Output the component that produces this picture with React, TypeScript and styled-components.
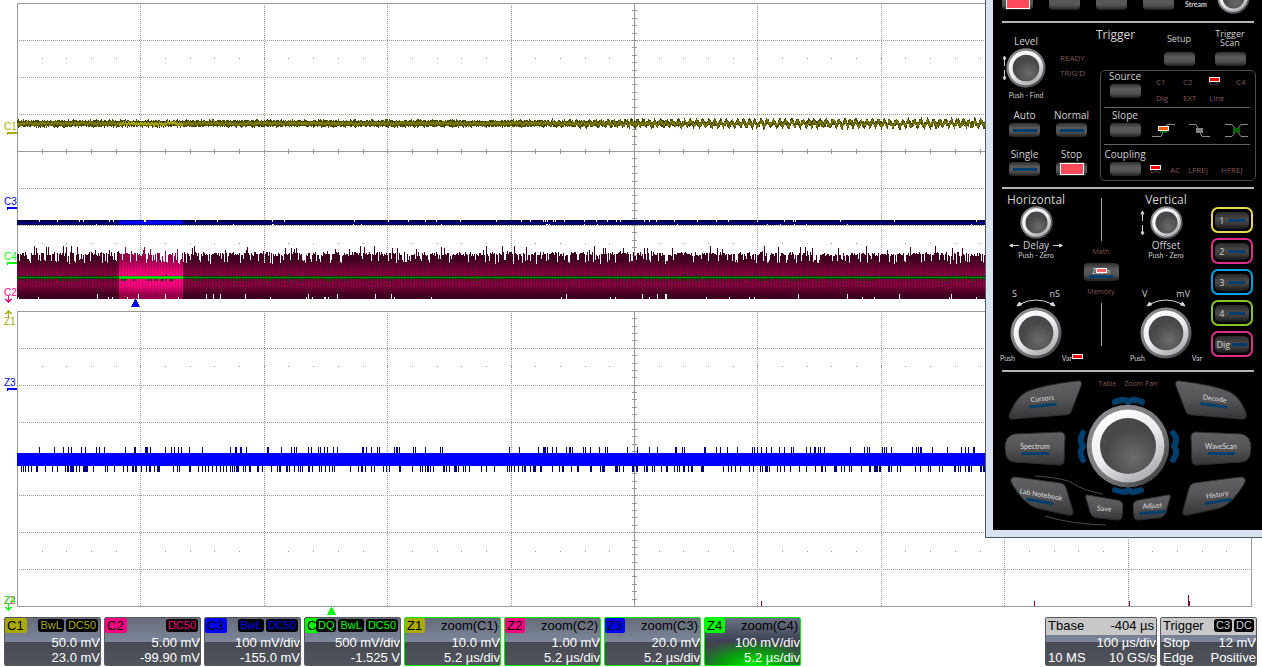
import React from 'react';
import styled, { createGlobalStyle, css } from 'styled-components';

const Global = createGlobalStyle`
  * { box-sizing: border-box; }
  html, body { margin: 0; background: #fff; }
  body { font-family: "Liberation Sans", Arial, sans-serif; overflow: hidden; }
  button { font: inherit; color: inherit; border: 0; padding: 0; margin: 0; background: none; cursor: pointer; }
`;

/* ---------- waveform display ---------- */

const VIEW_W = 1262;
const VIEW_H = 616;
const LEFT = 17;
const RIGHT = 1251;
const TRACE_END = 1000;
const GRID = '#999999';

const rng = (seed: number) => () => {
  seed = (seed * 1664525 + 1013904223) % 4294967296;
  return seed / 4294967296;
};
const bar = (x: number, y: number, w: number, h: number) => `M${x} ${y}h${w}v${h}h${-w}z`;
const colX = (i: number, parts = 10) => Math.round(LEFT + ((RIGHT - LEFT) * i) / parts);

const Graticule = ({ top, bottom }: { top: number; bottom: number }) => {
  const rowY = (i: number, parts = 8) => Math.round(top + ((bottom - top) * i) / parts - 0.1);
  const mid = rowY(4);
  const center = colX(5);
  let solid = bar(LEFT, top, RIGHT - LEFT + 1, 1) + bar(LEFT, bottom, RIGHT - LEFT + 1, 1);
  solid += bar(LEFT, top, 1, bottom - top) + bar(RIGHT, top, 1, bottom - top);
  solid += bar(center, top, 1, bottom - top) + bar(LEFT, mid, RIGHT - LEFT, 1);
  for (let i = 1; i < 40; i++) solid += bar(center - 2, rowY(i, 40), 5, 1);
  for (let i = 1; i < 50; i++) solid += bar(colX(i, 50), mid - 2, 1, 5);
  for (let i = 1; i < 50; i++) {
    solid += bar(colX(i, 50), rowY(3, 16), 1, 1) + bar(colX(i, 50), rowY(13, 16), 1, 1);
  }
  let dotted = '';
  for (let i = 1; i < 8; i++) {
    if (i !== 4) for (let x = LEFT + 2; x < RIGHT; x += 2) dotted += bar(x, rowY(i), 1, 1);
  }
  for (let i = 1; i < 10; i++) {
    if (i !== 5) for (let y = top + 2; y < bottom; y += 2) dotted += bar(colX(i), y, 1, 1);
  }
  return <path d={solid + dotted} fill={GRID} />;
};

const buildC1 = () => {
  const r = rng(7);
  let dark = '', mid = '', hot = '';
  let phase = 0;
  for (let x = LEFT; x < TRACE_END; x++) {
    phase += 0.7 + r() * 0.7;
    const swing = x > 480 ? Math.sin(phase) * Math.min(2, (x - 480) / 130) : 0;
    const lift = Math.round(swing);
    const up = r() < 0.1 ? 5 : r() < 0.5 ? 3 : 4;
    const down = r() < 0.1 ? 4 : r() < 0.5 ? 2 : 3;
    dark += bar(x, 124 - up + lift, 1, up + down);
    const inHot = x >= 119 && x < 183;
    const seg = bar(x, 121 + lift + Math.round(r() * 2), 1, 3);
    if (inHot) hot += seg; else mid += seg;
  }
  return { dark, mid, hot };
};

const buildC3Gaps = () => {
  const r = rng(33);
  let d = '';
  for (let x = LEFT; x < TRACE_END; x++) {
    if (r() < 0.04) d += bar(x, 220, 1, 2);
    if (r() < 0.02) d += bar(x, 224, 1, 1);
  }
  return d;
};

const buildC2 = () => {
  const r = rng(91);
  let body = '', bodyHot = '', stripes = '', stripesHot = '', notch = '', green = '';
  for (let x = LEFT; x < TRACE_END; x++) {
    const hot = x >= 119 && x < 183;
    const roll = r();
    const top = roll < 0.24 ? 259 + Math.round(r() * 5) : roll < 0.9 ? 252 + Math.round(r() * 4) : 246 + Math.round(r() * 5);
    const column = bar(x, top, 1, 299 - top);
    if (hot) bodyHot += column; else body += column;
    if (x % 3 === 1) {
      const start = 259 + Math.round(r() * 4);
      const stripe = bar(x, start, 1, 297 - start);
      if (hot) stripesHot += stripe; else stripes += stripe;
    }
    if (r() < 0.055) notch += bar(x, r() < 0.5 ? 294 : 297, 1, 5);
    if (r() < 0.2) green += bar(x, 279, 1, 2);
    if (r() < 0.01) green += bar(x, 274, 1, 2);
  }
  return { body, bodyHot, stripes, stripesHot, notch, green };
};

const buildZ3 = () => {
  const r = rng(515);
  let d = '';
  for (let x = LEFT; x < TRACE_END; x++) {
    if (r() < 0.11) d += bar(x, 447, 1, 6);
    if (r() < 0.27) d += bar(x, 466, 1, 6);
  }
  return d;
};

const c1 = buildC1();
const c2 = buildC2();
const c3Gaps = buildC3Gaps();
const z3 = buildZ3();

const OLIVE = '#aaaa00';
const PINK = '#ff0080';
const BLUE = '#0000ff';
const LIME = '#00ff00';

type Mark = { text: string; y: number; color: string; kind: 'bar' | 'down' | 'up' };
const marks: Mark[] = [
  { text: 'C1', y: 130, color: OLIVE, kind: 'bar' },
  { text: 'C3', y: 205, color: BLUE, kind: 'bar' },
  { text: 'C4', y: 260, color: LIME, kind: 'bar' },
  { text: 'C2', y: 296, color: PINK, kind: 'down' },
  { text: 'Z1', y: 325, color: OLIVE, kind: 'up' },
  { text: 'Z3', y: 386, color: BLUE, kind: 'bar' },
  { text: 'Z2', y: 604, color: PINK, kind: 'down' },
  { text: 'Z4', y: 604, color: LIME, kind: 'down' },
];

const Plot = styled.svg`
  display: block;
  width: 100%;
  height: auto;
  font: 10px "Liberation Sans", Arial, sans-serif;
`;

const markShape = (m: Mark) => {
  if (m.kind === 'bar') return bar(7, m.y + 2, 10, 2) + bar(7, m.y + 2, 1, 3);
  const y = m.kind === 'down' ? m.y + 3 : m.y - 12;
  const dir = m.kind === 'down' ? 1 : -1;
  return bar(8, y - 3, 1, 7) + bar(7, y + 2 * dir, 3, 1) + bar(6, y + dir, 2, 1) + bar(9, y + dir, 2, 1) + bar(5, y, 2, 1) + bar(10, y, 2, 1);
};

const TraceShade = ({ id, edge, core }: { id: string; edge: string; core: string }) => (
  <linearGradient id={id} gradientUnits="userSpaceOnUse" x1="0" y1="246" x2="0" y2="299">
    <stop offset="0.25" stopColor={edge} />
    <stop offset="0.5" stopColor={core} />
    <stop offset="0.75" stopColor={core} />
    <stop offset="0.92" stopColor={edge} />
  </linearGradient>
);

const Waveforms = () => (
  <Plot viewBox={`0 0 ${VIEW_W} ${VIEW_H}`} shapeRendering="crispEdges" role="img" aria-label="Oscilloscope traces">
    <defs>
      <TraceShade id="c2-body" edge="#400020" core="#84003f" />
      <TraceShade id="c2-stripe" edge="#400020" core="#640031" />
      <TraceShade id="c2-hot" edge="#960049" core="#ff0080" />
      <TraceShade id="c2-hot-stripe" edge="#900048" core="#cc0066" />
    </defs>
    <Graticule top={3} bottom={299} />
    <Graticule top={311} bottom={606} />
    <path d={c1.dark} fill="#484800" />
    <path d={c1.mid} fill="#787800" />
    <path d={c1.hot} fill="#a4a400" />
    <path d={bar(LEFT, 220, TRACE_END, 5)} fill="#000044" />
    <path d={bar(LEFT, 222, TRACE_END, 2)} fill="#00007c" />
    <path d={bar(119, 220, 64, 5)} fill="#000090" />
    <path d={bar(119, 221, 64, 3)} fill={BLUE} />
    <path d={c3Gaps} fill="#fff" />
    <path d={c2.body} fill="url(#c2-body)" />
    <path d={c2.stripes} fill="url(#c2-stripe)" />
    <path d={c2.bodyHot} fill="url(#c2-hot)" />
    <path d={c2.stripesHot} fill="url(#c2-hot-stripe)" />
    <path d={c2.notch} fill="#fff" />
    <path d={bar(LEFT, 299, TRACE_END, 4)} fill="#fff" />
    <path d={c2.green + bar(LEFT, 276, TRACE_END, 3)} fill="#004400" />
    <path d={bar(LEFT, 277, TRACE_END, 1)} fill="#008800" />
    <path d={bar(119, 276, 64, 3)} fill="#00b400" />
    <path d={bar(119, 277, 64, 1)} fill={LIME} />
    <path d={z3} fill="#000080" />
    <path d={bar(LEFT, 453, TRACE_END, 13)} fill={BLUE} />
    <path d={bar(761, 601, 1, 5) + bar(1034, 601, 1, 5) + bar(1129, 601, 1, 5) + bar(1188, 595, 1, 11) + bar(1189, 601, 1, 5)} fill="#80003e" />
    <path d="M135 299h1l4 8h-9z" fill={BLUE} />
    <path d="M331 607h1l4 8h-9z" fill={LIME} />
    {marks.map(m => (
      <g key={m.text} fill={m.color}>
        <text x="4" y={m.y}>{m.text}</text>
        <path d={markShape(m)} />
      </g>
    ))}
  </Plot>
);

/* ---------- descriptor boxes ---------- */

const Screen = styled.main`
  position: relative;
  min-height: 100vh;
  overflow: hidden;
`;
const Descriptors = styled.footer`
  display: flex;
  gap: 3px;
  padding: 1px 5px 0 4px;
`;
const Spacer = styled.div`flex: 1;`;
const Box = styled.section<{ $zoom?: boolean; $lit?: boolean; $wide?: boolean }>`
  width: ${p => (p.$wide ? 112 : 97)}px;
  height: 49px;
  border: 1px solid ${p => (p.$zoom ? '#00f000' : '#55585f')};
  border-radius: 2px;
  color: #fff;
  font-size: 13px;
  line-height: 15px;
  white-space: nowrap;
  text-align: right;
  overflow: hidden;
  background: ${p => p.$lit
    ? 'radial-gradient(ellipse 60px 24px at 50% 46px, #00e800, #0a9a10 50%, transparent 100%), linear-gradient(#6b7184, #3d4053 50%, #40444e 52%)'
    : 'linear-gradient(#666b79, #7d869b 51%, #474a53 52%, #51545c)'};
`;
const Head = styled.header<{ $light?: boolean }>`
  display: flex;
  justify-content: space-between;
  height: 17px;
  padding: ${p => (p.$light ? '0 2px' : '0 2px 0 0')};
  color: #000;
  background: ${p => (p.$light ? '#c8c8c8' : 'none')};
`;
const Tag = styled.b<{ $color: string }>`
  height: 15px;
  padding: 0 3px 0 2px;
  font-weight: 400;
  border-radius: 2px;
  color: #000;
  background: ${p => p.$color};
`;
const Flags = styled.span`
  display: flex;
  gap: 2px;
  margin-left: -8px;
  padding-top: 1px;
`;
const Flag = styled.i<{ $color: string }>`
  height: 13px;
  padding: 0 2px;
  border-radius: 3px;
  font: normal 11px/13px "Liberation Sans", Arial, sans-serif;
  color: ${p => p.$color};
  background: #000;
`;
const Line = styled.div<{ $split?: boolean }>`
  display: flex;
  justify-content: ${p => (p.$split ? 'space-between' : 'flex-end')};
  padding-left: 2px;
`;

type Desc = { tag: string; color: string; flags?: string[]; title?: string; a: string; b: string; lit?: boolean };
const descs: Desc[] = [
  { tag: 'C1', color: OLIVE, flags: ['BwL', 'DC50'], a: '50.0 mV', b: '23.0 mV' },
  { tag: 'C2', color: PINK, flags: ['DC50'], a: '5.00 mV', b: '-99.90 mV' },
  { tag: 'C3', color: BLUE, flags: ['BwL', 'DC50'], a: '100 mV/div', b: '-155.0 mV' },
  { tag: 'C', color: LIME, flags: ['DQ', 'BwL', 'DC50'], a: '500 mV/div', b: '-1.525 V' },
  { tag: 'Z1', color: OLIVE, title: 'zoom(C1)', a: '10.0 mV', b: '5.2 µs/div' },
  { tag: 'Z2', color: PINK, title: 'zoom(C2)', a: '1.00 mV', b: '5.2 µs/div' },
  { tag: 'Z3', color: BLUE, title: 'zoom(C3)', a: '20.0 mV', b: '5.2 µs/div' },
  { tag: 'Z4', color: LIME, title: 'zoom(C4)', a: '100 mV/div', b: '5.2 µs/div', lit: true },
];

/* ---------- front panel window ---------- */

const Window = styled.aside`
  position: absolute;
  top: 0;
  right: 0;
  width: 277px;
  padding: 0 0 7px 7px;
  border: solid #55585f;
  border-width: 0 0 1px 1px;
  background: #d8e4f2;
`;
const Panel = styled.div`
  height: 530px;
  padding: 0 7px 0 9px;
  overflow: hidden;
  background: #000;
  color: #d0d0d0;
  font-family: "Open Sans", "Noto Sans", sans-serif;
  font-size: 10px;
  line-height: 11px;
`;
const Strip = styled.div`
  display: flex;
  height: 21px;
  gap: 16px;
  align-items: flex-start;
  overflow: hidden;
`;
const Rule = styled.hr`
  width: 252px;
  height: 2px;
  margin: 0;
  border: 0;
  background: #b4b4b4;
`;
const Text = styled.span<{ $size?: number; $dim?: boolean }>`
  font-size: ${p => p.$size ?? 10}px;
  line-height: ${p => (p.$size ?? 10) + 1}px;
  white-space: nowrap;
  color: ${p => (p.$dim ? '#805858' : 'inherit')};
`;
const Tiny = styled(Text).attrs({ $size: 7 })`
  font-family: Lato, "Open Sans", sans-serif;
`;
const Cap = styled.button<{ $lamp?: 'blue' | 'red' }>`
  display: flex;
  align-items: center;
  justify-content: center;
  flex: none;
  width: 31px;
  height: 14px;
  border-radius: 4px;
  background: linear-gradient(#303030, #5a5a5a 35%, #545454 65%, #202020);
  ${p => p.$lamp && css`
    &::after {
      content: "";
      width: ${p.$lamp === 'red' ? 22 : 24}px;
      height: ${p.$lamp === 'red' ? 10 : 3}px;
      border: ${p.$lamp === 'red' ? '1px solid #fff' : '0'};
      background: ${p.$lamp === 'red' ? '#ff4a5c' : '#003f6d'};
    }
  `}
`;
const Led = styled.i`
  flex: none;
  width: 11px;
  height: 5px;
  border: 1px solid #fff;
  background: #f00;
`;

const Knob = ({ size, label }: { size: number; label: string }) => {
  const id = `knob-${label}`;
  return (
    <button aria-label={label}>
      <svg width={size} height={size} viewBox="0 0 60 60" display="block">
        <defs>
          <linearGradient id={`${id}-rim`} x1="0" y1="0" x2="1" y2="1">
            <stop offset="0" stopColor="#929294" />
            <stop offset="0.6" stopColor="#747476" />
            <stop offset="1" stopColor="#2e2e30" />
          </linearGradient>
          <linearGradient id={`${id}-ring`} x1="0.2" y1="0" x2="0.8" y2="1">
            <stop offset="0" stopColor="#ffffff" />
            <stop offset="0.5" stopColor="#ececf0" />
            <stop offset="1" stopColor="#a4a4a8" />
          </linearGradient>
          <radialGradient id={`${id}-face`} cx="0.6" cy="0.7">
            <stop offset="0" stopColor="#6c6c6e" />
            <stop offset="1" stopColor="#48484a" />
          </radialGradient>
        </defs>
        <circle cx="30" cy="30" r="29.5" fill={`url(#${id}-rim)`} />
        <circle cx="30" cy="30" r="26" fill={`url(#${id}-ring)`} />
        <circle cx="30" cy="30" r="20" fill={`url(#${id}-face)`} />
      </svg>
    </button>
  );
};

const VArrows = () => (
  <svg width="5" height="26" viewBox="0 0 5 26" stroke="#d0d0d0" fill="#d0d0d0" display="block">
    <path d="M2.500 2v9M2.500 15v9" />
    <path d="M2.500 1l1.500 3h-3zM2.500 25l1.500-3h-3z" />
  </svg>
);
const HArrow = ({ flip }: { flip?: boolean }) => (
  <svg width="10" height="5" viewBox="0 0 10 5" stroke="#d0d0d0" fill="#d0d0d0" transform={flip ? 'scale(-1 1)' : undefined}>
    <path d="M2 2.500h8" />
    <path d="M0.500 2.500l3-1.500v3z" />
  </svg>
);
const SweepArrow = () => (
  <svg width="40" height="8" viewBox="0 0 40 8" display="block" stroke="#d8d8d8" fill="none">
    <path d="M3 5.500Q20 -3.500 37 5.500" />
    <path d="M1 7l2.500-4 2 3zM39 7l-2.500-4-2 3z" fill="#d8d8d8" />
  </svg>
);

const Trigger = styled.section`
  display: grid;
  grid-template-columns: 98px 156px;
  height: 164px;
`;
const TrigLeft = styled.div`
  display: flex;
  flex-direction: column;
  padding-top: 13px;
`;
const LevelRow = styled.div`
  display: grid;
  grid-template-columns: 4px 40px 1fr;
  align-items: center;
  height: 42px;
`;
const StatusCol = styled.div`
  display: grid;
  gap: 6px;
  padding: 0 0 6px 14px;
`;
const LevelLabel = styled.div`
  width: 48px;
  text-align: center;
`;
const Pairs = styled.div`
  display: grid;
  grid-template-columns: 45px 49px;
  row-gap: 12px;
  padding-top: 10px;
`;
const Labelled = styled.label`
  display: flex;
  flex-direction: column;
  align-items: center;
  gap: 2px;
`;
const TrigHead = styled.div`
  display: grid;
  grid-template-columns: 54px 50px 52px;
  height: 47px;
  padding-top: 5px;
`;
const TrigTitle = styled(Text)`
  margin-left: -4px;
`;
const HeadKey = styled.label`
  display: flex;
  flex-direction: column;
  align-items: center;
  justify-content: flex-end;
  gap: 9px;
  height: 38px;
  padding-bottom: 0;
  text-align: center;
  & > span { line-height: 9px; }
`;
const ScanKey = styled(HeadKey)`
  gap: 5px;
`;
const Group = styled.div`
  width: 156px;
  height: 111px;
  padding: 0 5px 0 3px;
  border: 1px solid #4a4a4a;
  border-radius: 5px;
`;
const GroupRow = styled.div<{ $pad: number }>`
  display: grid;
  grid-template-columns: 42px 1fr;
  height: ${p => 36 + p.$pad / 2}px;
  padding-top: ${p => p.$pad}px;
  & + & { border-top: 1px solid #666; }
`;
const Options = styled.div<{ $tight?: boolean }>`
  display: grid;
  grid-template-columns: ${p => (p.$tight ? '20px 18px 33px 1fr' : '27px 26px 27px 1fr')};
  align-content: ${p => (p.$tight ? 'end' : 'center')};
  row-gap: 7px;
  padding: ${p => (p.$tight ? '0 0 8px 4px' : '0 0 0 10px')};
`;
const Stack = styled.span`
  display: grid;
  & > * { grid-area: 1 / 1; }
  & > i { align-self: start; }
`;
const Edges = styled.svg`
  align-self: end;
`;
const EdgeIcons = () => (
  <Edges width="104" height="26" viewBox="0 0 104 26" fill="none" stroke="#8a8a8a" strokeWidth="1">
    <path d="M6 18.500h9l6-12h8M43 6.500h7l6 12h8M79 6.500h7l9 12h7M79 18.500h7l9-12h7" />
    <rect x="14" y="10" width="7" height="5" fill="#006400" stroke="none" />
    <rect x="50" y="10" width="7" height="5" fill="#808080" stroke="none" />
    <rect x="87" y="10" width="7" height="5" fill="#006400" stroke="none" />
    <rect x="12.500" y="8.500" width="10" height="4" fill="#ff5a00" stroke="#fff" />
  </Edges>
);

const Axes = styled.section`
  display: grid;
  grid-template-columns: 68px 62px 68px 1fr;
  height: 181px;
`;
const Axis = styled.div`
  display: flex;
  flex-direction: column;
  align-items: center;
  padding-top: 4px;
`;
const KnobRow = styled.div`
  display: grid;
  grid-template-columns: 5px 33px 5px;
  gap: 5px;
  align-items: center;
`;
const DelayRow = styled.div`
  display: flex;
  gap: 4px;
  align-items: center;
  justify-content: space-between;
  height: 11px;
  margin-top: 1px;
`;
const Units = styled.div`
  display: flex;
  justify-content: space-between;
  width: 48px;
  margin-top: 30px;
`;
const Feet = styled.div`
  display: flex;
  justify-content: space-between;
  width: 72px;
  height: 9px;
  margin-top: -5px;
`;
const VarLed = styled.span`
  display: flex;
  & > i { margin: 0 -11px 0 0; }
`;
const Middle = styled.div`
  display: flex;
  flex-direction: column;
  align-items: center;
  gap: 7px;
  padding-top: 9px;
`;
const Stem = styled.i`
  width: 1px;
  height: 43px;
  background: #a0a0a0;
`;
const ZoomCap = styled(Cap)`
  width: 35px;
  height: 18px;
  flex-direction: column;
  &::after { height: 3px; }
`;
const ZoomLabel = styled(Stack)`
  justify-items: center;
  & > i { align-self: center; background: #ff6464; }
`;
const Channels = styled.div`
  display: flex;
  flex-direction: column;
  gap: 5px;
  padding: 18px 3px 0 11px;
`;
const Channel = styled.button<{ $ring: string }>`
  display: flex;
  align-items: center;
  justify-content: center;
  width: 42px;
  height: 26px;
  border: 2px solid ${p => p.$ring};
  border-radius: 7px;
`;
const ChannelFace = styled.span`
  display: flex;
  align-items: center;
  justify-content: space-evenly;
  width: 34px;
  height: 17px;
  border-radius: 5px;
  font-size: 9px;
  background: linear-gradient(#2a2a2a, #4a4a4a 45%, #3e3e3e 65%, #181818);
  & > i { width: 16px; height: 3px; background: #003f6d; }
`;

const Nav = styled.section`
  display: grid;
  grid-template-columns: 80px 92px 80px;
  height: 158px;
`;
const NavCol = styled.div<{ $end?: boolean }>`
  display: flex;
  flex-direction: column;
  justify-content: space-between;
  align-items: ${p => (p.$end ? 'flex-end' : 'flex-start')};
  padding: 8px 2px 14px;
`;
const NavMid = styled.div`
  display: flex;
  flex-direction: column;
  align-items: center;
  padding-top: 8px;
`;
const NavLabels = styled.div`
  display: flex;
  gap: 8px;
  height: 14px;
`;
const Dial = styled.div`
  display: grid;
  flex: none;
  place-items: center;
  width: 104px;
  height: 104px;
  & > * { grid-area: 1 / 1; }
`;
const SoftKeys = styled.div`
  display: flex;
  gap: 10px;
  margin-top: -4px;
`;
const Key = styled.button`
  display: grid;
  place-items: center;
  flex: none;
  & > * { grid-area: 1 / 1; }
  & > svg { overflow: visible; }
`;
const KeyFace = styled.span<{ $turn: number }>`
  display: flex;
  flex-direction: column;
  align-items: center;
  gap: 2px;
  font: 7px/8px Lato, "Open Sans", sans-serif;
  color: #dcdcdc;
  white-space: nowrap;
  transform: rotate(${p => p.$turn}deg);
  & > i { width: 27px; height: 3px; background: #003f6d; }
`;

type NavKeyProps = { label: string; w: number; h: number; d: string; turn?: number; plain?: boolean; trim?: string };
const NavKey = ({ label, w, h, d, turn = 0, plain, trim }: NavKeyProps) => {
  const id = `key-${label.replace(' ', '')}`;
  return (
    <Key>
      <svg width={w} height={h} viewBox={`0 0 ${w} ${h}`}>
        <defs>
          <linearGradient id={id} x1="0" y1="0" x2="0" y2="1">
            <stop offset="0" stopColor="#626264" />
            <stop offset="0.5" stopColor="#545456" />
            <stop offset="1" stopColor="#343436" />
          </linearGradient>
        </defs>
        <path d={d} fill={`url(#${id})`} stroke="#2c2c2c" strokeWidth="1" />
        {trim && <path d={trim} fill="none" stroke="#4c4c4c" />}
      </svg>
      <KeyFace $turn={turn}>{label}{!plain && <i />}</KeyFace>
    </Key>
  );
};

const TopCap = styled(Cap)`margin-top: -4px;`;
const TopText = styled(Tiny)`
  width: 24px;
  margin-left: -5px;
  font-weight: 700;
`;
const TopKnob = styled.span`
  margin: -19px 0 0 -8px;
`;
const Top = () => (
  <Strip>
    <TopCap $lamp="red" aria-label="Auto setup" />
    <TopCap aria-label="Default" />
    <TopCap aria-label="Print" />
    <TopCap aria-label="Touch" />
    <TopText>Stream</TopText>
    <TopKnob><Knob size={33} label="Intensity" /></TopKnob>
  </Strip>
);

const FrontPanel = () => (
  <Window aria-label="Front panel">
    <Panel>
      <Top />
      <Rule />
      <Trigger>
        <TrigLeft>
          <LevelLabel><Text>Level</Text></LevelLabel>
          <LevelRow>
            <VArrows />
            <Knob size={40} label="Level" />
            <StatusCol><Text $size={8} $dim>READY</Text><Text $size={8} $dim>TRIG'D</Text></StatusCol>
          </LevelRow>
          <LevelLabel><Tiny>Push - Find</Tiny></LevelLabel>
          <Pairs>
            <Labelled>Auto<Cap $lamp="blue" /></Labelled>
            <Labelled>Normal<Cap $lamp="blue" /></Labelled>
            <Labelled>Single<Cap $lamp="blue" /></Labelled>
            <Labelled>Stop<Cap $lamp="red" /></Labelled>
          </Pairs>
        </TrigLeft>
        <div>
          <TrigHead>
            <TrigTitle $size={12}>Trigger</TrigTitle>
            <HeadKey><Text $size={9}>Setup</Text><Cap /></HeadKey>
            <ScanKey><Text $size={9}>Trigger<br />Scan</Text><Cap /></ScanKey>
          </TrigHead>
          <Group>
            <GroupRow $pad={0}>
              <Labelled>Source<Cap /></Labelled>
              <Options>
                <Text $size={8} $dim>C1</Text><Text $size={8} $dim>C2</Text>
                <Stack><Text $size={8} $dim>C3</Text><Led /></Stack>
                <Text $size={8} $dim>C4</Text>
                <Text $size={8} $dim>Dig</Text><Text $size={8} $dim>EXT</Text><Text $size={8} $dim>Line</Text>
              </Options>
            </GroupRow>
            <GroupRow $pad={2}>
              <Labelled>Slope<Cap /></Labelled>
              <EdgeIcons />
            </GroupRow>
            <GroupRow $pad={4}>
              <Labelled>Coupling<Cap /></Labelled>
              <Options $tight>
                <Stack><Text $size={8} $dim>DC</Text><Led /></Stack>
                <Text $size={8} $dim>AC</Text><Text $size={8} $dim>LFREJ</Text><Text $size={8} $dim>HFREJ</Text>
              </Options>
            </GroupRow>
          </Group>
        </div>
      </Trigger>
      <Rule />
      <Axes>
        <Axis>
          <Text $size={12}>Horizontal</Text>
          <KnobRow><span /><Knob size={33} label="Delay" /></KnobRow>
          <DelayRow><HArrow /><Text>Delay</Text><HArrow flip /></DelayRow>
          <Tiny>Push - Zero</Tiny>
          <Units><Text $size={9}>S</Text><Text $size={9}>nS</Text></Units>
          <SweepArrow />
          <Knob size={52} label="Timebase" />
          <Feet><Tiny>Push</Tiny><VarLed><Tiny>Var</Tiny><Led /></VarLed></Feet>
        </Axis>
        <Middle>
          <Stem />
          <Text $size={7} $dim>Math</Text>
          <ZoomCap $lamp="blue">
            <ZoomLabel><Tiny>Zoom</Tiny><Led /></ZoomLabel>
          </ZoomCap>
          <Text $size={7} $dim>Memory</Text>
          <Stem />
        </Middle>
        <Axis>
          <Text $size={12}>Vertical</Text>
          <KnobRow><VArrows /><Knob size={33} label="Offset" /></KnobRow>
          <DelayRow><Text>Offset</Text></DelayRow>
          <Tiny>Push - Zero</Tiny>
          <Units><Text $size={9}>V</Text><Text $size={9}>mV</Text></Units>
          <SweepArrow />
          <Knob size={52} label="Gain" />
          <Feet><Tiny>Push</Tiny><Tiny>Var</Tiny></Feet>
        </Axis>
        <Channels>
          <Channel $ring="#e8d84c"><ChannelFace>1<i /></ChannelFace></Channel>
          <Channel $ring="#e02c8c"><ChannelFace>2<i /></ChannelFace></Channel>
          <Channel $ring="#00a0e4"><ChannelFace>3<i /></ChannelFace></Channel>
          <Channel $ring="#88c428"><ChannelFace>4<i /></ChannelFace></Channel>
          <Channel $ring="#e02c8c"><ChannelFace>Dig<i /></ChannelFace></Channel>
        </Channels>
      </Axes>
      <Rule />
      <Nav>
        <NavCol>
          <NavKey label="Cursors" w={76} h={40} turn={-6} d="M22 12Q38 5 73 1Q79 0 77 6L67 32Q66 35 60 35L10 39Q3 40 6 33Q12 18 22 12Z" />
          <NavKey label="Spectrum" w={62} h={35} d="M10 3L56 1Q61 1 61 6L60 30Q60 34 55 34L10 31Q1 30 1 17Q1 5 10 3Z" />
          <NavKey label="Lab Notebook" w={74} h={40} turn={10} d="M12 1L57 7Q61 8 62 12L69 35Q70 40 64 39L32 32Q20 28 8 8Q4 1 12 1Z" trim="M31 0Q62 2 70 8T99 18M41 40Q66 48 102 49" />
        </NavCol>
        <NavMid>
          <NavLabels><Text $size={7} $dim>Table</Text><Text $size={7} $dim>Zoom Pan</Text></NavLabels>
          <Dial>
            <svg width="104" height="104" viewBox="0 0 104 104" fill="none" stroke="#003f6d" strokeWidth="6" strokeLinecap="round">
              <path d="M39 8Q46 5 49 6L52 8L56 6Q60 5 66 8M39 96Q45 98 49 98L52 96L56 98Q60 98 65 96M7 39Q4 44 5 48L7 52L5 56Q4 60 7 66M97 39Q101 44 100 48L98 52L100 56Q101 60 97 66" />
            </svg>
            <Knob size={84} label="Adjust-dial" />
          </Dial>
          <SoftKeys>
            <NavKey label="Save" w={38} h={27} plain turn={4} d="M3 1L32 6Q38 7 38 12L37 23Q37 26 32 26L13 24Q7 24 5 18L1 4Q0 0 3 1Z" />
            <NavKey label="Adjust" w={38} h={27} turn={-4} d="M35 1L6 6Q0 7 0 12L1 23Q1 26 6 26L25 24Q31 24 33 18L37 4Q38 0 35 1Z" />
          </SoftKeys>
        </NavMid>
        <NavCol $end>
          <NavKey label="Decode" w={76} h={40} turn={8} d="M54 12Q38 5 4 1Q-2 0 0 6L10 32Q11 35 17 35L64 39Q72 40 70 33Q65 18 54 12Z" />
          <NavKey label="WaveScan" w={62} h={35} d="M52 3L6 1Q1 1 1 6L2 30Q2 34 7 34L52 31Q61 30 61 17Q61 5 52 3Z" />
          <NavKey label="History" w={70} h={40} turn={-9} d="M58 1L12 7Q8 8 7 12L1 35Q0 40 6 39L38 32Q50 28 62 8Q66 1 58 1Z" />
        </NavCol>
      </Nav>
    </Panel>
  </Window>
);

export default function App() {
  return (
    <>
      <Global />
      <Screen>
        <Waveforms />
        <Descriptors>
          {descs.map(d => (
            <Box key={d.tag} $zoom={!!d.title} $lit={d.lit}>
              <Head>
                <Tag $color={d.color}>{d.tag}</Tag>
                {d.title ?? <Flags>{d.flags!.map(f => <Flag key={f} $color={d.color}>{f}</Flag>)}</Flags>}
              </Head>
              <Line>{d.a}</Line>
              <Line>{d.b}</Line>
            </Box>
          ))}
          <Spacer />
          <Box $wide>
            <Head $light><span>Tbase</span><span>-404 µs</span></Head>
            <Line>100 µs/div</Line>
            <Line $split><span>10 MS</span><span>10 GS/s</span></Line>
          </Box>
          <Box>
            <Head $light>
              <span>Trigger</span>
              <Flags><Flag $color="#c8c8c8">C3</Flag><Flag $color="#c8c8c8">DC</Flag></Flags>
            </Head>
            <Line $split><span>Stop</span><span>12 mV</span></Line>
            <Line $split><span>Edge</span><span>Positive</span></Line>
          </Box>
        </Descriptors>
        <FrontPanel />
      </Screen>
    </>
  );
}
